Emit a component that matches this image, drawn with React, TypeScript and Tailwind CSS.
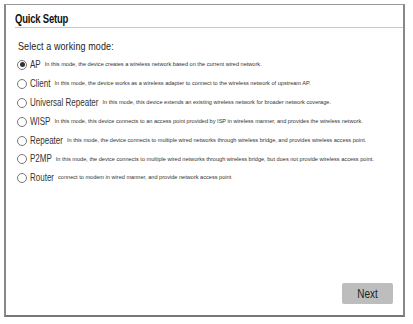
import React from "react";

const modes = [
  { name: "AP", desc: "In this mode, the device creates a wireless network based on the current wired network.", checked: true },
  { name: "Client", desc: "In this mode, the device works as a wireless adapter to connect to the wireless network of upstream AP." },
  { name: "Universal Repeater", desc: "In this mode, this device extends an existing wireless network for broader network coverage." },
  { name: "WISP", desc: "In this mode, this device connects to an access point provided by ISP in wireless manner, and provides the wireless network." },
  { name: "Repeater", desc: "In this mode, the device connects to multiple wired networks through wireless bridge, and provides wireless access point." },
  { name: "P2MP", desc: "In this mode, the device connects to multiple wired networks through wireless bridge, but does not provide wireless access point." },
  { name: "Router", desc: "connect to modem in wired manner, and provide network access point" },
];

export default function App() {
  return (
    <div className="w-[413px] h-[324px] bg-white pt-[4px] pl-[4px]" style={{ fontFamily: '"Liberation Sans", Arial, sans-serif' }}>
      <div className="w-[401px] h-[313px] border-t border-t-[#9a9a9a] border-l-2 border-r-2 border-b-2 border-l-[#888] border-r-[#888] border-b-[#777] flex flex-col">
        <div className="ml-[9px] h-[23px] border-b border-[#c8c8c8] flex items-end">
          <span className="inline-block text-[9.5px] font-bold text-[#111] leading-none pb-[2px] scale-y-[1.3] origin-bottom tracking-[-0.2px]">Quick Setup</span>
        </div>
        <div className="ml-[12px] mt-[12px] text-[9px] leading-[12px] text-[#222] tracking-[0.1px]">
          <span className="inline-block scale-y-[1.2]">Select a working mode:</span>
        </div>
        <div className="mt-[3.5px] flex flex-col">
          {modes.map((m) => (
            <div key={m.name} className="h-[18.9px] flex items-center pl-[11px]">
              <span className="w-[10px] h-[10px] rounded-full border border-[#777] flex items-center justify-center shrink-0">
                {m.checked && <span className="w-[5px] h-[5px] rounded-full bg-[#333]" />}
              </span>
              <span className="inline-block ml-[3px] text-[8px] text-[#333] leading-none scale-y-[1.35]">{m.name}</span>
              <span className="ml-[4px] text-[5.6px] text-[#333] leading-none whitespace-nowrap">{m.desc}</span>
            </div>
          ))}
        </div>
        <div className="flex-1" />
        <div className="flex justify-end pr-[10px] pb-[11px]">
          <div className="w-[51px] h-[21px] bg-[#bdbdbd] rounded-[2px] flex items-center justify-center text-[10px] text-[#222]">
            <span className="inline-block scale-y-[1.25]">Next</span>
          </div>
        </div>
      </div>
    </div>
  );
}
